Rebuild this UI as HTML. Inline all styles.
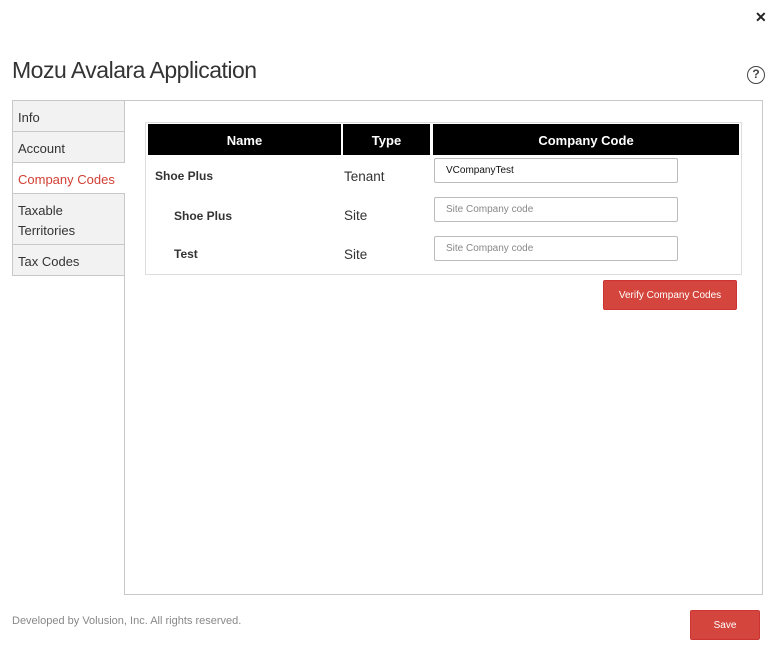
<!DOCTYPE html>
<html><head><meta charset="utf-8"><style>
*{box-sizing:border-box;margin:0;padding:0}
body{width:782px;height:668px;background:#fff;font-family:"Liberation Sans",sans-serif;position:relative;overflow:hidden;color:#333}
.a{position:absolute}
.title{left:12px;top:57px;font-size:23px;color:#333;letter-spacing:-0.5px}
.tab{position:absolute;left:12px;width:113px;background:#f2f2f2;border:1px solid #c8c8c8;font-size:13px;padding:7px 5px;line-height:20px;color:#333}
.panel{left:124px;top:100px;width:639px;height:495px;border:1px solid #c8c8c8}
.tbl{left:145px;top:122px;width:597px;height:153px;border:1px solid #ddd}
.th{position:absolute;top:124px;height:31px;background:#000;color:#fff;font-weight:bold;font-size:13px;text-align:center;line-height:33px}
.cell{position:absolute;font-size:13px}
.inp{position:absolute;left:434px;width:244px;height:25px;border:1px solid #bbb;border-radius:2px;font-size:10px;padding-left:11px;line-height:24px}
.btn{position:absolute;background:#d4463d;color:#fff;font-size:10px;text-align:center;border-radius:2px;border:1px solid #c33}
</style></head><body>
<div class="a" style="left:755px;top:9px;font-size:14px;font-weight:bold;color:#222">✕</div>
<div class="a" style="left:747px;top:66px;width:18px;height:18px;border:1.5px solid #444;border-radius:50%;font-size:12px;font-weight:bold;text-align:center;line-height:15px;color:#444">?</div>
<div class="a title">Mozu Avalara Application</div>
<div class="a panel"></div>
<div class="tab" style="top:100px;height:32px">Info</div>
<div class="tab" style="top:131px;height:32px">Account</div>
<div class="tab" style="top:162px;height:32px;background:#fff;color:#d13f33;border-right:none;width:113px">Company Codes</div>
<div class="tab" style="top:193px;height:52px">Taxable Territories</div>
<div class="tab" style="top:244px;height:32px">Tax Codes</div>
<div class="a tbl"></div>
<div class="th" style="left:148px;width:193px">Name</div>
<div class="th" style="left:343px;width:87px">Type</div>
<div class="th" style="left:433px;width:306px">Company Code</div>
<div class="cell" style="left:155px;top:169px;font-weight:bold;font-size:12px">Shoe Plus</div>
<div class="cell" style="left:344px;top:169px;font-size:13.5px">Tenant</div>
<div class="cell" style="left:174px;top:209px;font-weight:bold;font-size:12px">Shoe Plus</div>
<div class="cell" style="left:344px;top:208px;font-size:13.5px">Site</div>
<div class="cell" style="left:174px;top:247px;font-weight:bold;font-size:12px">Test</div>
<div class="cell" style="left:344px;top:247px;font-size:13.5px">Site</div>
<div class="inp" style="top:158px;color:#111">VCompanyTest</div>
<div class="inp" style="top:197px;color:#888">Site Company code</div>
<div class="inp" style="top:236px;color:#888">Site Company code</div>
<div class="btn" style="left:603px;top:280px;width:134px;height:30px;line-height:29px">Verify Company Codes</div>
<div class="a" style="left:12px;top:615px;font-size:11px;color:#888">Developed by Volusion, Inc. All rights reserved.</div>
<div class="btn" style="left:690px;top:610px;width:70px;height:30px;line-height:29px">Save</div>
</body></html>
